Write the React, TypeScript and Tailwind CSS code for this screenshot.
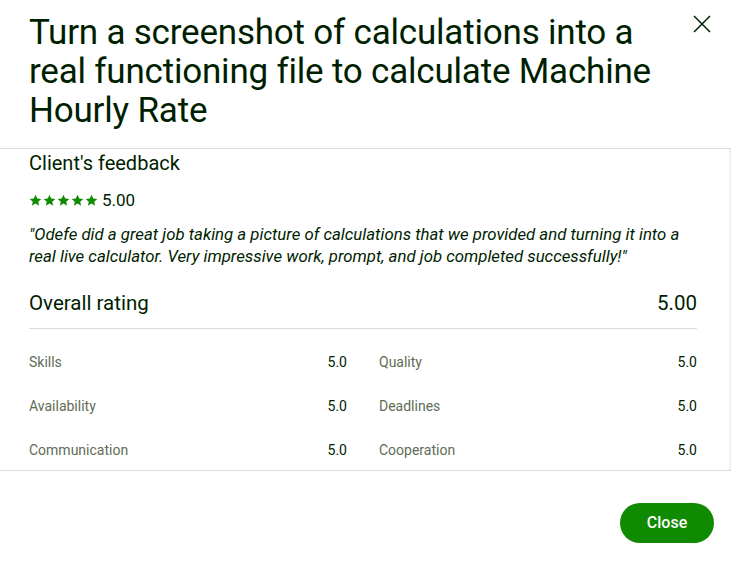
import React from "react";

const rows: [string, string, string, string][] = [
  ["Skills", "5.0", "Quality", "5.0"],
  ["Availability", "5.0", "Deadlines", "5.0"],
  ["Communication", "5.0", "Cooperation", "5.0"],
];

function Star() {
  return (
    <svg width="13" height="13" viewBox="0 0 24 24" className="fill-[#108a00]">
      <path d="M12 1.5l3.2 7 7.5.7-5.7 5 1.7 7.4L12 17.7 5.3 21.6 7 14.2 1.3 9.2l7.5-.7z" />
    </svg>
  );
}

export default function App() {
  return (
    <div
      className="w-[731px] h-[572px] bg-white text-[#001e00] overflow-hidden flex flex-col"
      style={{ fontFamily: "Roboto, 'Liberation Sans', sans-serif" }}
    >
      <div className="flex items-start pl-[29px] pr-[13px] pt-[13px] h-[148px]">
        <h2 className="text-[35px] leading-[39px] tracking-[-0.2px] font-normal w-[645px]">
          Turn a screenshot of calculations into a real functioning file to calculate Machine Hourly Rate
        </h2>
        <button className="ml-auto mt-[-5px] w-[32px] h-[32px] flex items-center justify-center">
          <svg width="18" height="18" viewBox="0 0 18 18" fill="none" stroke="#001e00" strokeWidth="1.5">
            <path d="M1 1l16 16M17 1L1 17" />
          </svg>
        </button>
      </div>
      <div className="border-y border-[#d5e0d5] h-[323px] flex">
        <div className="flex-1 pl-[29px] pr-[32px] overflow-hidden">
          <div className="text-[20px] leading-[28px] mt-[0px]">Client's feedback</div>
          <div className="flex items-center gap-[4px] mt-[13px]">
            <div className="flex gap-[1px]">
              <Star />
              <Star />
              <Star />
              <Star />
              <Star />
            </div>
            <span className="text-[17px] leading-[20px]">5.00</span>
          </div>
          <p className="italic text-[16.8px] leading-[22px] mt-[13px]">
            "Odefe did a great job taking a picture of calculations that we provided and turning it into a real live calculator. Very impressive work, prompt, and job completed successfully!"
          </p>
          <div className="flex justify-between items-center text-[20.5px] leading-[28px] mt-[22px] pb-[11px] border-b border-[#d5e0d5]">
            <span>Overall rating</span>
            <span>5.00</span>
          </div>
          <div className="grid grid-cols-2 gap-x-[32px] mt-[11px]">
            {rows.map((r) => (
              <React.Fragment key={r[0]}>
                <div className="flex justify-between h-[44px] items-center text-[14px]">
                  <span className="text-[#5e6d55]">{r[0]}</span>
                  <span>{r[1]}</span>
                </div>
                <div className="flex justify-between h-[44px] items-center text-[14px]">
                  <span className="text-[#5e6d55]">{r[2]}</span>
                  <span>{r[3]}</span>
                </div>
              </React.Fragment>
            ))}
          </div>
        </div>
        <div className="w-[2px] bg-[#f0f0f0]" />
      </div>
      <div className="flex justify-end pr-[17px] pt-[32px]">
        <button className="w-[94px] h-[40px] rounded-full bg-[#108a00] text-white text-[16px] font-medium">
          Close
        </button>
      </div>
    </div>
  );
}
